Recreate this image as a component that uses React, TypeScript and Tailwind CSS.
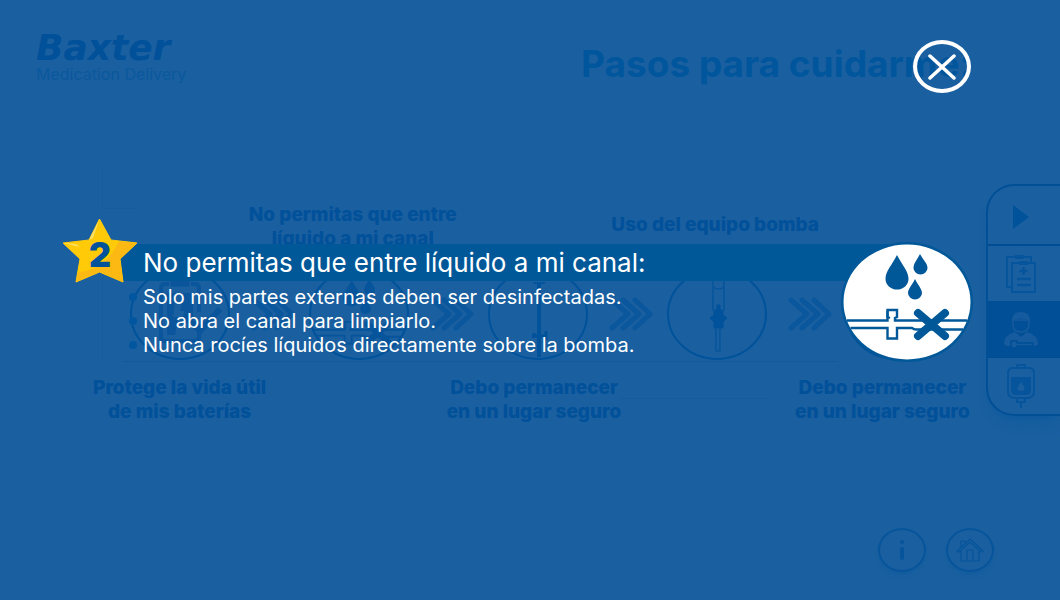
import React from "react";

const navItem = "flex w-full items-center justify-center pr-1.5 border-b border-[#004d94]";

function Chevrons() {
  return (
    <svg width="44" height="34" viewBox="0 0 44 34" fill="none" stroke="#0a579d" strokeWidth="5" strokeLinecap="round" strokeLinejoin="round" aria-hidden="true">
      <path d="M3 3 19 17 3 31M14 3 30 17 14 31M26 3 41 17 26 31" />
    </svg>
  );
}

function BatteryArt() {
  return (
    <g stroke="#0a559c" fill="none">
      <path d="M41 19v-5q0-3 3-3v-2q0-3 3-3h6q3 0 3 3v2q3 0 3 3v5z" fill="#0a559c" />
      <path d="M39 17h-4q-4 0-4 4v49q0 4 4 4h30q4 0 4-4V58M61 17h4q4 0 4 4v24" strokeWidth="4" />
      <path d="M37 26h9l-3 24h5l-3 18h-8zM54 26h9v24l-6 6-5-4 3-8h-5z" fill="#0a559c" stroke="none" />
      <path d="M60 54l10 10 20-22" strokeWidth="6" />
    </g>
  );
}

function CanalShapes({ color }: { color: string }) {
  return (
    <g>
      <path d="M55 12C50 22 43.500 28 43.500 36a11.500 10.500 0 0 0 23 0C66.500 28 60 22 55 12z" fill={color} />
      <path d="M78 11C75 17 71.500 20 71.500 25a7 6.500 0 0 0 14 0C85.500 20 81 17 78 11z" fill={color} />
      <path d="M73 36C70 42 66 46 66 50a7 6.500 0 0 0 14 0C80 46 76 42 73 36z" fill={color} />
      <g stroke={color} strokeWidth="2.4" fill="none">
        <path d="M5 77.500H45.500V67h9.500v7l-2 1v2.500H125" />
        <path d="M8.500 85H45.500V95.500h9.500V85H70q2 1.500 4 1.500H121" />
        <path d="M45.500 68v6l2.500 1" />
      </g>
      <path d="M76 70l27 23M103 70 76 93" stroke={color} strokeWidth="8" strokeLinecap="round" />
    </g>
  );
}

function StepCircle({ kind }: { kind: number }) {
  return (
    <svg width="100" height="94" viewBox="0 0 100 94" aria-hidden="true">
      <ellipse cx="50" cy="47" rx="49" ry="45" fill="none" stroke="#00529b" strokeWidth="2" />
      {kind === 1 && <BatteryArt />}
      {kind === 2 && (
        <g transform="translate(1 4) scale(.76)">
          <CanalShapes color="#06549b" />
        </g>
      )}
      {kind === 3 && (
        <g stroke="#00529b" fill="none">
          <path d="M51 16V90" strokeWidth="4" />
          <path d="M45 16h12" strokeWidth="1.500" />
          <path d="M44 69h14M58 64v9M46 66v5" strokeWidth="3" />
        </g>
      )}
      {kind === 4 && (
        <g stroke="#00529b" fill="none">
          <path d="M46 8v36M57 8v36M46 20q5.500 4 11 0M49 62v22h4V62" strokeWidth="1.200" />
          <path d="M50 38h3v4l3 2v4l4 3-4 4v6h-9v-6l-4-4 4-3v-4l3-2z" fill="#00529b" strokeWidth="1" />
        </g>
      )}
    </svg>
  );
}

function Label({ lines, className = "" }: { lines: string[]; className?: string }) {
  return (
    <p className={"flex flex-col items-center whitespace-nowrap text-[19px] leading-6 font-extrabold text-[#00509a] " + className}>
      {lines.map((l) => (
        <span key={l}>{l}</span>
      ))}
    </p>
  );
}

function SideNav() {
  return (
    <nav className="flex w-[74px] flex-col self-start overflow-hidden rounded-l-[28px] border-2 border-r-0 border-[#004f97] shadow-lg shadow-[#00529b]/40">
      <button aria-label="Reproducir" className={navItem + " h-[60px] border-b-2 pt-1"}>
        <svg width="18" height="24" viewBox="0 0 18 24"><path d="M1 0 17 12 1 24z" fill="#00529b" /></svg>
      </button>
      <button aria-label="Historial" className={navItem + " h-14"}>
        <svg width="32" height="40" viewBox="0 0 32 40" fill="none" stroke="#06549b" strokeWidth="2">
          <path d="M6 33H2V3h24v5" />
          <path d="M7 9h23v29H7z" />
          <path d="M10 3h9M14 9h9" strokeWidth="4" />
          <path d="M18.500 13v8M14.500 17h8M12 25h14M12 31h14" strokeWidth="2.500" />
        </svg>
      </button>
      <button aria-label="Cuidados" className={navItem + " h-14 bg-[#004f97]"}>
        <svg width="36" height="40" viewBox="0 0 36 40">
          <path d="M1 34q0-9 11-12l6 5 6-5q11 3 11 12-1 2-4 2H5q-3 0-4-2z" fill="#165b9d" />
          <path d="M10 10h16v4q0 8-8 8t-8-8z" fill="none" stroke="#165b9d" strokeWidth="1.500" />
          <path d="M9 11q0-9 9-9t9 9q-9-5-18 0z" fill="#165b9d" />
          <path d="M8 31h6v2h16v3H14v2H8z" fill="#165b9d" stroke="#004f97" strokeWidth="1.500" />
        </svg>
      </button>
      <button aria-label="Infusión" className="flex h-14 w-full items-center justify-center pr-1.5">
        <svg width="30" height="46" viewBox="0 0 30 46" fill="none" stroke="#06549b" strokeWidth="2">
          <path d="M11 5V2h8v3M6 5h18q4 1 4 5v18q0 7-7 7H9q-7 0-7-7V10q0-4 4-5zM11 36v3h8v-3M15 39v6" />
          <path d="M5 14h20v13q0 5-5 5H10q-5 0-5-5z" fill="#06549b" stroke="none" />
          <path d="M15 19q-7 9 0 9t0-9z" fill="#1a5f9f" stroke="none" />
        </svg>
      </button>
    </nav>
  );
}

function Page() {
  return (
    <div className="flex min-h-screen flex-col">
      <header className="flex h-[184px] items-start justify-between pl-9 pr-[88px] pt-8">
        <a href="#inicio" className="flex flex-col">
          <span className="font-['DejaVu_Sans'] text-4xl leading-8 font-bold text-[#00509a] italic">Baxter</span>
          <span className="pt-0.5 text-base leading-4 font-normal text-[#0a589d]">Medication Delivery</span>
        </a>
        <h1 className="pt-3 text-[37px] leading-10 font-bold whitespace-nowrap text-[#00569d]">Pasos para cuidarme:</h1>
      </header>
      <main className="flex">
        <section className="grid flex-1 grid-cols-5 pt-[19px] pl-[90px]">
          <Label className="col-start-2 pr-3" lines={["No permitas que entre", "líquido a mi canal"]} />
          <Label className="col-start-4 pt-2.5 pr-1" lines={["Uso del equipo bomba"]} />
          <div className="col-span-5 col-start-1 grid grid-cols-5 pt-4">
            {[1, 2, 3, 4, 5].map((n) => (
              <div key={n} className="flex items-center justify-center">
                <div className="relative">
                  <StepCircle kind={n} />
                  {n < 5 && (
                    <span className="absolute top-1/2 left-[121px] -translate-y-1/2">
                      <Chevrons />
                    </span>
                  )}
                </div>
              </div>
            ))}
          </div>
          <div className="col-span-5 mr-[148px] ml-8 mb-3.5 border-b border-[#14599c]" />
          <Label className="col-start-1" lines={["Protege la vida útil", "de mis baterías"]} />
          <Label className="col-start-3 pr-2" lines={["Debo permanecer", "en un lugar seguro"]} />
          <Label className="col-start-5 pr-7" lines={["Debo permanecer", "en un lugar seguro"]} />
        </section>
        <SideNav />
      </main>
      <footer className="mt-auto flex justify-end gap-5 pr-[66px] pb-7">
        <button aria-label="Información" className="flex h-11 w-12 items-center justify-center rounded-[50%] border-2 border-[#06549b] shadow-md shadow-[#00529b]/30">
          <svg width="8" height="22" viewBox="0 0 8 22" fill="none" stroke="#06549b" strokeWidth="4" strokeLinecap="round"><path d="M4 3v0M4 10v9" /></svg>
        </button>
        <button aria-label="Inicio" className="flex h-11 w-12 items-center justify-center rounded-[50%] border-2 border-[#06549b] shadow-md shadow-[#00529b]/30">
          <svg width="28" height="24" viewBox="0 0 28 24" fill="none" stroke="#06549b" strokeWidth="1.200">
            <path d="M1 13 14 1l13 12-2 1L14 4 3 14zM5 13v10h18V13M11 23V12h6v11M5 9V3h4v3" />
          </svg>
        </button>
      </footer>
      <svg className="absolute top-[160px] left-[100px]" width="680" height="250" viewBox="0 0 680 250" fill="none" stroke="#155b9d" aria-hidden="true">
        <path d="M2.500 8v40.500H36M2.500 118V202" />
        <path d="M520 238.500H668" />
      </svg>
    </div>
  );
}

function Star() {
  return (
    <span className="absolute -top-[26px] left-0 flex h-[66px] w-[76px] items-center justify-center">
      <svg className="absolute inset-0" width="76" height="66" viewBox="0 0 76 66" aria-hidden="true">
        <path d="M37.500 1 49 22 75 25 58 41 61 64 37.500 54 14 64l4-23L1 25 27 22z" fill="#ffcb08" stroke="#ffcb08" strokeLinejoin="round" />
        <path d="M75 25 58 41 61 64 37.500 54 14 64l2-10Q44 52 57 23z" fill="#fdb913" />
        <path d="M37.500 1 31 20 27 22zM1 25l17 4-4-3z" fill="#ffe066" />
      </svg>
      <strong className="relative pt-2 text-[34px] leading-none font-black text-[#00529b]">2</strong>
    </span>
  );
}

function Modal() {
  return (
    <div role="dialog" aria-modal="true" aria-labelledby="step-title" className="absolute inset-0 pt-10">
      <div className="flex justify-end pr-[89px]">
        <button aria-label="Cerrar" className="flex h-[53px] w-[58px] items-center justify-center rounded-[50%] border-4 border-white">
          <svg width="28" height="26" viewBox="0 0 28 26" stroke="#fff" strokeWidth="3.500" strokeLinecap="round"><path d="M2 2 26 24M26 2 2 24" /></svg>
        </button>
      </div>
      <article className="relative mt-[151px] mr-[88px] ml-[62px]">
        <h2 id="step-title" className="mr-14 ml-14 bg-[#005899] pl-[25px] text-[26px] leading-[37px] font-normal whitespace-nowrap text-white">
          No permitas que entre líquido a mi canal:
        </h2>
        <Star />
        <ul className="pt-1 pl-[81px] text-xl leading-6 whitespace-nowrap text-white">
          {["Solo mis partes externas deben ser desinfectadas.", "No abra el canal para limpiarlo.", "Nunca rocíes líquidos directamente sobre la bomba."].map((t) => (
            <li key={t} className="relative">
              <i className="absolute top-2 -left-3.5 size-2 rounded-full bg-[#0057a0]" />
              {t}
            </li>
          ))}
        </ul>
        <svg className="absolute -top-0.5 -right-px" width="132" height="120" viewBox="-1 -1 132 120" role="img" aria-label="Canal sin líquido">
          <ellipse cx="65" cy="59" rx="66" ry="60" fill="#005899" />
          <ellipse cx="65" cy="59" rx="63.500" ry="57.500" fill="#fff" />
          <CanalShapes color="#005899" />
        </svg>
      </article>
    </div>
  );
}

export default function App() {
  return (
    <div className="relative min-h-screen overflow-hidden bg-[#1a5f9f] font-['Inter',sans-serif]">
      <Page />
      <Modal />
    </div>
  );
}
